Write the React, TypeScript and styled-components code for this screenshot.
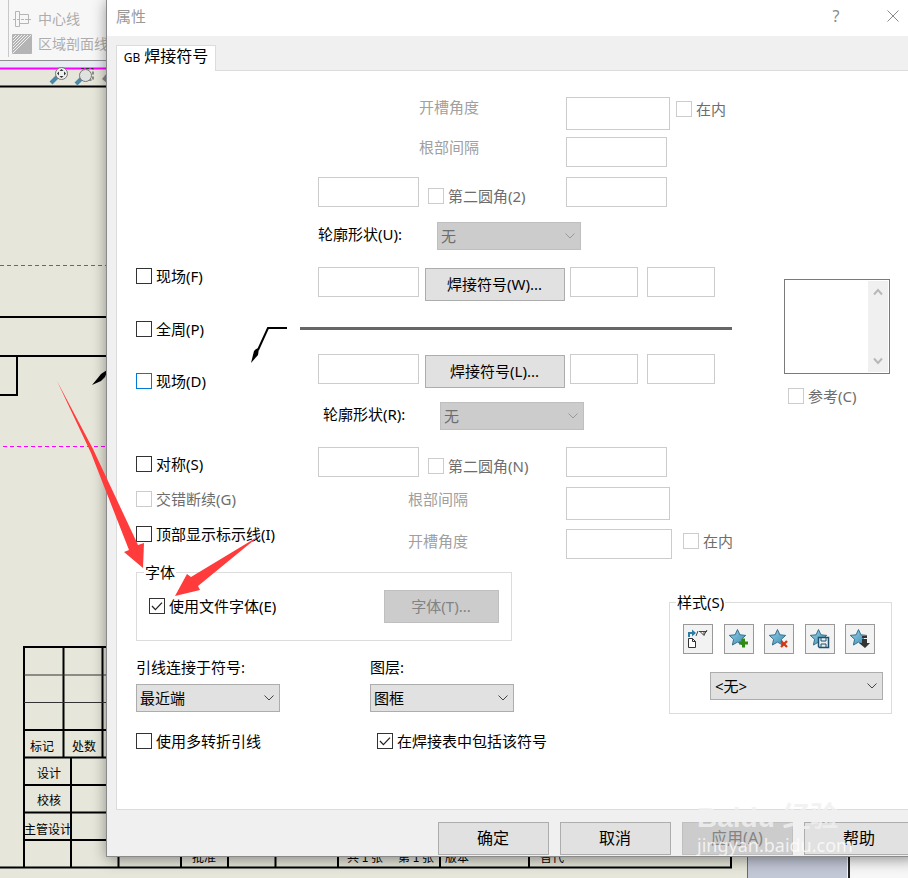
import React from "react";
import styled, { createGlobalStyle, css } from "styled-components";

const Global = createGlobalStyle`
  * { box-sizing: border-box; }
  html { overflow: hidden; }
  body { margin: 0; background: #e6e6da; }
  body, button, input, select {
    font-family: "Noto Sans", "Noto Sans CJK SC", sans-serif;
    font-size: 15px;
    color: #000;
  }
`;

const Stage = styled.div`
  display: grid;
  grid-template-columns: minmax(0, 1fr);
  min-height: 100vh;
  overflow: hidden;
  & > * { grid-area: 1 / 1; }
`;

const Workspace = styled.div`
  background: #e6e6da;
  display: grid;
  & > * { grid-area: 1 / 1; }
`;

const Sheet = styled.svg`
  width: 908px;
  height: 878px;
  text { font: 12px "Noto Sans CJK SC", sans-serif; }
`;

const Ribbon = styled.div`
  align-self: start;
  height: 61px;
  display: flex;
  background: #f7f7f7;
  border-bottom: 1px solid #8f8f8f;
`;

const RibbonGroup = styled.div`
  margin: 0 0 3px 8px;
  padding: 6px 0 0 3px;
  border-left: 1px solid #c8c8c8;
  display: flex;
  flex-direction: column;
`;

const RibbonItem = styled.button`
  height: 26px;
  padding: 0;
  border: 0;
  background: none;
  display: flex;
  align-items: center;
  gap: 6px;
  font-size: 14px;
  line-height: 20px;
  color: #adadad;
  white-space: nowrap;
`;

const Dialog = styled.section`
  position: relative;
  align-self: start;
  margin: 0 -9px 0 107px;
  background: #f0f0f0;
  border-bottom: 1px solid #8a8a8a;
  box-shadow: -1px 0 0 #8a8a8a, 0 2px 14px rgba(0, 0, 0, 0.45);
`;

const TitleBar = styled.header`
  height: 36px;
  padding: 0 14px 4px 9px;
  background: #fff;
  display: flex;
  align-items: center;
  color: #999;
`;

const Title = styled.h1`
  margin: 0;
  flex: 1;
  font-size: 15px;
  font-weight: 400;
  line-height: 20px;
`;

const TitleButton = styled.button`
  width: 20px;
  height: 20px;
  padding: 0;
  margin-left: 37px;
  border: 0;
  background: none;
  color: #8a8a8a;
  font-size: 16px;
  line-height: 20px;
`;

const Tab = styled.button`
  position: relative;
  z-index: 1;
  display: block;
  width: 100px;
  height: 26px;
  margin: 9px 0 -1px 9px;
  padding: 0 0 4px;
  border: 1px solid #dcdcdc;
  border-bottom: 0;
  background: #fff;
  font-size: 16px;
  line-height: 20px;
  white-space: nowrap;
  small { font-size: 12px; }
`;

const Panel = styled.div`
  margin-left: 9px;
  min-height: 740px;
  padding: 26px 0 0 19px;
  background: #fff;
  border: 1px solid #dcdcdc;
`;

const Upper = styled.div`
  display: grid;
  grid-template-columns: 115px 533px 1fr;
  height: 463px;
`;

const Stack = styled.div<{ $top?: number }>`
  display: flex;
  flex-direction: column;
  align-items: flex-start;
  padding-top: ${(p) => p.$top ?? 0}px;
`;

const CheckLabel = styled.label<{ $off?: boolean; $top?: number; $left?: number }>`
  display: flex;
  align-items: center;
  gap: 4px;
  height: 20px;
  line-height: 20px;
  margin-top: ${(p) => p.$top ?? 0}px;
  margin-left: ${(p) => p.$left ?? 0}px;
  color: ${(p) => (p.$off ? "#6d6d6d" : "#000")};
  white-space: nowrap;
`;

const CheckBox = styled.input<{ $hot?: boolean }>`
  appearance: none;
  flex: none;
  width: 16px;
  height: 16px;
  margin: 0;
  border: 1px solid ${(p) => (p.$hot ? "#0078d7" : "#333")};
  background: #fff;
  &:disabled { border-color: #ccc; }
  &:checked {
    background: #fff
      url("data:image/svg+xml,%3Csvg xmlns='http://www.w3.org/2000/svg' viewBox='0 0 14 14'%3E%3Cpath d='M2 7l3.4 3.6L12 3.6' fill='none' stroke='%23222' stroke-width='1.3'/%3E%3C/svg%3E");
  }
`;

const Row = styled.div<{ $top?: number; $indent?: number }>`
  display: flex;
  align-items: flex-start;
  margin-top: ${(p) => p.$top ?? 0}px;
  padding-left: ${(p) => p.$indent ?? 67}px;
`;

const Cell = styled.div<{ $w: number; $drop?: number }>`
  flex: none;
  width: ${(p) => p.$w}px;
  padding-top: ${(p) => p.$drop ?? 0}px;
`;

const Field = styled.input<{ $w?: number; $tall?: boolean }>`
  flex: none;
  width: ${(p) => p.$w ?? 101}px;
  height: ${(p) => (p.$tall ? 33 : 30)}px;
  padding: 0 4px;
  border: 1px solid #ccc;
  background: #fff;
`;

const Caption = styled.label<{ $off?: boolean }>`
  display: block;
  line-height: 20px;
  white-space: nowrap;
  color: ${(p) => (p.$off ? "#a0a0a0" : "#000")};
`;

const Drop = styled.select<{ $w?: number }>`
  appearance: none;
  flex: none;
  width: ${(p) => p.$w ?? 144}px;
  height: 28px;
  padding: 0 24px 0 3px;
  border: 1px solid #adadad;
  border-radius: 0;
  color: #000;
  opacity: 1;
  background: #e1e1e1
    url("data:image/svg+xml,%3Csvg xmlns='http://www.w3.org/2000/svg' viewBox='0 0 10 6'%3E%3Cpath d='M.5.5L5 5 9.5.5' fill='none' stroke='%23444'/%3E%3C/svg%3E")
    no-repeat right 5px center / 10px 6px;
  &:disabled {
    border-color: #bfbfbf;
    color: #6d6d6d;
    background-color: #ccc;
    background-image: url("data:image/svg+xml,%3Csvg xmlns='http://www.w3.org/2000/svg' viewBox='0 0 10 6'%3E%3Cpath d='M.5.5L5 5 9.5.5' fill='none' stroke='%23999'/%3E%3C/svg%3E");
  }
`;

const Push = styled.button<{ $w: number; $top?: number }>`
  flex: none;
  width: ${(p) => p.$w}px;
  height: 33px;
  margin-top: ${(p) => p.$top ?? 0}px;
  padding: 0 1px 2px 0;
  border: 1px solid #adadad;
  background: #e1e1e1;
  line-height: 20px;
  &:disabled {
    border-color: #bfbfbf;
    background: #ccc;
    color: #838383;
  }
`;

const Leader = styled.div`
  display: flex;
  gap: 13px;
  height: 27px;
  margin-top: 26px;
  svg { flex: none; overflow: visible; }
`;

const ReferenceLine = styled.hr`
  width: 432px;
  height: 3px;
  margin: 0;
  border: 0;
  background: #666;
`;

const ListFrame = styled.div`
  display: flex;
  width: 106px;
  height: 95px;
  padding: 1px;
  border: 1px solid #7a7a7a;
  background: #fff;
`;

const List = styled.select`
  flex: 1;
  min-width: 0;
  border: 0;
  background: #fff;
  overflow: hidden;
`;

const ScrollTrack = styled.div`
  width: 20px;
  background: #f0f0f0;
  display: flex;
  flex-direction: column;
  justify-content: space-between;
  align-items: center;
  padding: 7px 0;
`;

const Lower = styled.div`
  display: flex;
  align-items: flex-start;
  margin-top: 2px;
`;

const LowerLeft = styled.div`
  flex: none;
  width: 376px;
`;

const groupFrame = css`
  margin: 0;
  min-width: 0;
  border: 1px solid #dcdcdc;
  legend {
    line-height: 20px;
    padding: 0 1px;
  }
`;

const FontGroup = styled.fieldset`
  ${groupFrame}
  height: 79px;
  padding: 8px 12px 0;
  display: flex;
  justify-content: space-between;
  align-items: flex-start;
  legend { margin-left: -5px; }
`;

const StyleGroup = styled.fieldset`
  ${groupFrame}
  flex: none;
  width: 223px;
  height: 122px;
  margin: 30px 0 0 157px;
  padding: 12px 8px 0 13px;
  legend { margin-left: -7px; }
`;

const IconBar = styled.div`
  display: flex;
  justify-content: space-between;
  width: 192px;
  margin-bottom: 18px;
`;

const IconButton = styled.button`
  width: 30px;
  height: 30px;
  padding: 0;
  border: 1px solid #999;
  background: #f2f2f2;
  display: grid;
  place-items: center;
`;

const StyleDrop = styled(Drop)`
  display: block;
  margin-left: auto;
  padding-left: 4px;
`;

const Footer = styled.footer`
  display: flex;
  justify-content: flex-end;
  gap: 11px;
  padding: 12px 2px 1px 0;
  button { font-size: 16px; }
`;

const Watermark = styled.div`
  position: absolute;
  right: 52px;
  bottom: 0;
  width: 168px;
  color: rgba(255, 255, 255, 0.75);
  pointer-events: none;
  font: 18px "Noto Sans", sans-serif;
  line-height: 22px;
  white-space: nowrap;
`;

const WatermarkLogo = styled.div`
  padding-bottom: 4px;
  color: rgba(240, 240, 240, 0.85);
  font: bold 28px "Liberation Sans", "Noto Sans CJK SC", sans-serif;
  line-height: 24px;
`;

const Arrows = styled.svg`
  position: relative;
  width: 908px;
  height: 878px;
  pointer-events: none;
`;

type CheckProps = {
  text: string;
  off?: boolean;
  on?: boolean;
  hot?: boolean;
  top?: number;
  left?: number;
};

const Check = ({ text, off, on, hot, top, left }: CheckProps) => (
  <CheckLabel $off={off} $top={top} $left={left}>
    <CheckBox type="checkbox" disabled={off} defaultChecked={on} $hot={hot} />
    {text}
  </CheckLabel>
);

const Star = ({ children }: { children: React.ReactNode }) => (
  <svg width="22" height="22" viewBox="0 0 22 22">
    <defs>
      <linearGradient id="star" x1="0" y1="0" x2="1" y2="1">
        <stop offset="0" stopColor="#9ad2e8" />
        <stop offset="1" stopColor="#3a8bb2" />
      </linearGradient>
    </defs>
    <path
      d="M9.5 1.5l2.4 5.3 5.8.6-4.3 3.9 1.2 5.7-5.1-2.9-5.1 2.9 1.2-5.7-4.3-3.9 5.8-.6z"
      fill="url(#star)"
      stroke="#35708f"
    />
    {children}
  </svg>
);

const Chevron = ({ up }: { up?: boolean }) => (
  <svg width="10" height="8" viewBox="0 0 10 8">
    <path d={up ? "M1 6.5L5 2l4 4.5" : "M1 1.5L5 6l4-4.5"} fill="none" stroke="#b8b8b8" strokeWidth="2" />
  </svg>
);

const Drawing = () => (
  <Sheet viewBox="0 0 908 878" aria-hidden="true">
    <rect y="60" width="107" height="8" fill="#e8ecf5" />
    <path d="M0 68.5H107" stroke="#f0f" strokeWidth="2" />
    <g stroke="#f0f" strokeDasharray="4 3">
      <path d="M0 265.5H107M3 446.5H107" />
    </g>
    <g stroke="#000" strokeWidth="2" fill="none">
      <path d="M0 86.5H107M0 317H107M0 356H107M17 356V395M0 395H18" />
      <path d="M24 867V647H107M63.5 647V757M102.5 647V757M24 730H107M24 757.5H107M71 757V867M24 785H107M24 812.5H107M24 840H107" />
      <path d="M0 867.5H732M118.5 840V867M181 840V867M228 840V867M275.5 840V867M338 840V867M440 840V867M529 840V867M731 840V868" />
    </g>
    <path d="M24 675H107M24 702.5H107" stroke="#333" />
    <path d="M107 370l-6 4-4 5-5 6 9-4 4-4 2-5z" />
    <g>
      <text x="30" y="751">标记</text>
      <text x="72" y="751">处数</text>
      <text x="37" y="778">设计</text>
      <text x="37" y="805">校核</text>
      <text x="24" y="834">主管设计</text>
      <text x="192" y="862">批准</text>
      <text x="347" y="862">共 1 张</text>
      <text x="398" y="862">第 1 张</text>
      <text x="445" y="862">版本</text>
      <text x="540" y="862">替代</text>
    </g>
    <path d="M747.5 850V878" stroke="#f0f" />
    <rect x="748" y="850" width="99" height="28" fill="#c3c8d7" />
    <rect x="847" y="850" width="61" height="28" fill="#f7f7f7" />
    <path d="M849 850V878" stroke="#222" strokeWidth="2" />
    <g>
      <path d="M51 83l6-6" stroke="#4a8aa8" strokeWidth="4" />
      <circle cx="61.5" cy="73.5" r="6" fill="#eef1ee" stroke="#777" />
      <path d="M61.5 69l2 2h-4zM61.5 78l2-2h-4zM57 73.5l2-2v4zM66 73.5l-2-2v4z" fill="#333" />
      <path d="M76 84l6-6" stroke="#4a8aa8" strokeWidth="4" />
      <path d="M81 68.5h12V80h-4" fill="none" stroke="#333" strokeDasharray="3 2" />
      <circle cx="85.5" cy="75.5" r="6" fill="#dfe3e0" stroke="#777" />
      <path d="M102 79l5-6v10z" fill="#888" />
    </g>
  </Sheet>
);

export default function App() {
  return (
    <>
      <Global />
      <Stage>
        <Workspace>
          <Drawing />
          <Ribbon>
            <RibbonGroup>
              <RibbonItem>
                <svg width="20" height="18" viewBox="0 0 20 18" fill="none" stroke="#b5b5b5">
                  <path d="M3.5 1.5h4v15h-4zM7.5 4.5h9v9h-9z" />
                  <path d="M1 9.5h18" strokeDasharray="3 1" />
                </svg>
                中心线
              </RibbonItem>
              <RibbonItem>
                <svg width="20" height="20" viewBox="0 0 20 20">
                  <rect width="20" height="20" rx="1" fill="#b4b4b4" />
                  <path d="M1 4l3-3M1 7l6-6M1 10l9-9M1 13L13 1M1 16L16 1M1 19L19 1" stroke="#f2f2f2" />
                </svg>
                区域剖面线
              </RibbonItem>
            </RibbonGroup>
          </Ribbon>
        </Workspace>

        <Dialog aria-label="属性">
          <TitleBar>
            <Title>属性</Title>
            <TitleButton aria-label="Help">?</TitleButton>
            <TitleButton aria-label="Close">
              <svg width="12" height="12" viewBox="0 0 12 12">
                <path d="M.5.5l11 11M11.5.5l-11 11" stroke="#8a8a8a" />
              </svg>
            </TitleButton>
          </TitleBar>
          <Tab>
            <small>GB</small> 焊接符号
          </Tab>
          <Panel>
            <Upper>
              <Stack $top={169}>
                <Check text="现场(F)" />
                <Check text="全周(P)" top={33} />
                <Check text="现场(D)" top={32} hot />
                <Check text="对称(S)" top={63} />
                <Check text="交错断续(G)" top={15} off />
                <Check text="顶部显示标示线(I)" top={15} />
              </Stack>

              <Stack>
                <Row>
                  <Cell $w={101} />
                  <Cell $w={147}><Caption $off htmlFor="angle1">开槽角度</Caption></Cell>
                  <Field id="angle1" $w={104} $tall disabled />
                  <Check text="在内" off top={2} left={6} />
                </Row>
                <Row $top={7}>
                  <Cell $w={101} />
                  <Cell $w={147}><Caption $off htmlFor="root1">根部间隔</Caption></Cell>
                  <Field id="root1" disabled />
                </Row>
                <Row $top={10}>
                  <Field aria-label="半径" disabled />
                  <Cell $w={147}><Check text="第二圆角(2)" off top={9} left={9} /></Cell>
                  <Field aria-label="第二圆角" disabled />
                </Row>
                <Row $top={15}>
                  <Cell $w={119} $drop={2}><Caption htmlFor="shapeU">轮廓形状(U):</Caption></Cell>
                  <Drop id="shapeU" disabled><option>无</option></Drop>
                </Row>
                <Row $top={17}>
                  <Field aria-label="上方尺寸" disabled />
                  <Cell $w={6} />
                  <Push $w={140} $top={1}>焊接符号(W)...</Push>
                  <Cell $w={5} />
                  <Field aria-label="上方长度" $w={68} disabled />
                  <Cell $w={9} />
                  <Field aria-label="上方间距" $w={68} disabled />
                </Row>
                <Leader>
                  <svg width="36" height="36" viewBox="0 0 36 36">
                    <path d="M36 1H17L7 23" fill="none" stroke="#000" strokeWidth="2" />
                    <path d="M8 21l-1 7-7 8 3-12 2-2z" />
                  </svg>
                  <ReferenceLine />
                </Leader>
                <Row>
                  <Field aria-label="下方尺寸" disabled />
                  <Cell $w={6} />
                  <Push $w={140} $top={1}>焊接符号(L)...</Push>
                  <Cell $w={5} />
                  <Field aria-label="下方长度" $w={68} disabled />
                  <Cell $w={9} />
                  <Field aria-label="下方间距" $w={68} disabled />
                </Row>
                <Row $top={14} $indent={72}>
                  <Cell $w={117} $drop={2}><Caption htmlFor="shapeR">轮廓形状(R):</Caption></Cell>
                  <Drop id="shapeR" disabled><option>无</option></Drop>
                </Row>
                <Row $top={17}>
                  <Field aria-label="半径" disabled />
                  <Cell $w={147}><Check text="第二圆角(N)" off top={9} left={9} /></Cell>
                  <Field aria-label="第二圆角" disabled />
                </Row>
                <Row $top={10}>
                  <Cell $w={90} />
                  <Cell $w={158} $drop={2}><Caption $off htmlFor="root2">根部间隔</Caption></Cell>
                  <Field id="root2" $w={104} $tall disabled />
                </Row>
                <Row $top={9}>
                  <Cell $w={90} />
                  <Cell $w={158} $drop={2}><Caption $off htmlFor="angle2">开槽角度</Caption></Cell>
                  <Field id="angle2" $w={106} disabled />
                  <Check text="在内" off top={2} left={11} />
                </Row>
              </Stack>

              <Stack $top={182}>
                <ListFrame>
                  <List multiple aria-label="参考" />
                  <ScrollTrack>
                    <Chevron up />
                    <Chevron />
                  </ScrollTrack>
                </ListFrame>
                <Check text="参考(C)" off top={12} left={4} />
              </Stack>
            </Upper>

            <Lower>
              <LowerLeft>
                <FontGroup>
                  <legend>字体</legend>
                  <Check text="使用文件字体(E)" on top={6} />
                  <Push $w={115} disabled>字体(T)...</Push>
                </FontGroup>
                <Row $indent={0} $top={16}>
                  <Cell $w={234}>
                    <Stack>
                      <Caption htmlFor="anchor">引线连接于符号:</Caption>
                      <Row $indent={0} $top={7}>
                        <Drop id="anchor"><option>最近端</option></Drop>
                      </Row>
                      <Check text="使用多转折引线" top={19} />
                    </Stack>
                  </Cell>
                  <Stack>
                    <Caption htmlFor="layer">图层:</Caption>
                    <Row $indent={0} $top={7}>
                      <Drop id="layer"><option>图框</option></Drop>
                    </Row>
                    <Check text="在焊接表中包括该符号" on top={19} left={7} />
                  </Stack>
                </Row>
              </LowerLeft>
              <StyleGroup>
                <legend>样式(S)</legend>
                <IconBar>
                  <IconButton aria-label="应用默认">
                    <svg width="22" height="22" viewBox="0 0 22 22" fill="none">
                      <path d="M2 9V5h4" stroke="#2b7da3" strokeWidth="2" />
                      <path d="M5 1.5v7L9 5z" fill="#2b7da3" />
                      <path d="M9 8l2-5M12 3.5h8M13 3.5l4 4V3M17 7l3-5" stroke="#444" />
                      <path d="M1.5 10.5h4l3 3v6h-7zM5.5 10.5v3h3" stroke="#333" fill="#fff" />
                    </svg>
                  </IconButton>
                  <IconButton aria-label="添加样式">
                    <Star><path d="M15.5 10.5v9M11 15h9" stroke="#2f8a12" strokeWidth="3" /></Star>
                  </IconButton>
                  <IconButton aria-label="删除样式">
                    <Star><path d="M13 13l6 6M19 13l-6 6" stroke="#d8330f" strokeWidth="2.2" /></Star>
                  </IconButton>
                  <IconButton aria-label="保存样式">
                    <Star>
                      <path d="M9.5 9.5h10v10h-9l-1-1z" fill="#e8f0f4" stroke="#21506b" strokeWidth="1.5" />
                      <path d="M12 10v3h5v-3M12 19v-3h5v3" fill="none" stroke="#21506b" />
                    </Star>
                  </IconButton>
                  <IconButton aria-label="装入样式">
                    <Star><path d="M13 8h5v2h-5zM13 11h5v4h3l-5 5-6-5h3z" fill="#333" /></Star>
                  </IconButton>
                </IconBar>
                <StyleDrop $w={173} aria-label="样式"><option>&lt;无&gt;</option></StyleDrop>
              </StyleGroup>
            </Lower>
          </Panel>
          <Footer>
            <Push $w={111}>确定</Push>
            <Push $w={111}>取消</Push>
            <Push $w={111} disabled>应用(A)</Push>
            <Push $w={111}>帮助</Push>
          </Footer>
          <Watermark aria-hidden="true">
            <WatermarkLogo>Baidu 经验</WatermarkLogo>
            jingyan.baidu.com
          </Watermark>
        </Dialog>

        <Arrows viewBox="0 0 908 878" fill="#ff3b3b" aria-hidden="true">
          <path d="M57 381L93 449 138 545l6-2-1 25-19-16 5-2L91 453z" />
          <path d="M259 536L198 586l2 4-25 6 12-22 4 3z" />
        </Arrows>
      </Stage>
    </>
  );
}
